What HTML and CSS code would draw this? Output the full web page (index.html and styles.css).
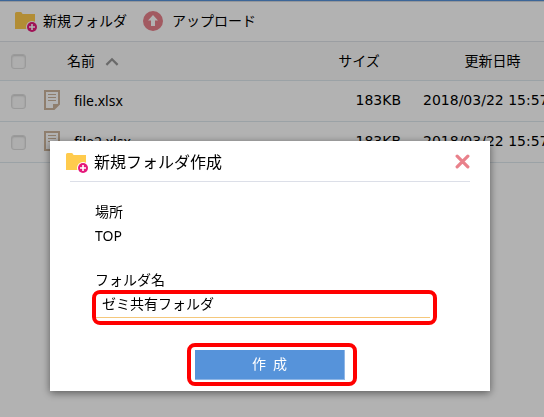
FILE: index.html
```
<!DOCTYPE html>
<html lang="ja">
<head>
  <meta charset="UTF-8" />
  <meta name="viewport" content="width=device-width, initial-scale=1.0" />
  <title>新規フォルダ作成</title>
  <link rel="stylesheet" href="styles.css">
</head>
<body>
  <!-- Shared icons -->
  <svg class="sprite" aria-hidden="true">
    <symbol id="icon-folder" viewBox="0 0 24 22">
      <path d="M1 2.5Q1 1 2.500 1H6.500Q7.500 1 8 2L8.500 3H21V18H1Z" fill="#ffcb4d" />
      <circle cx="18" cy="16" r="6" fill="#fff" />
      <circle cx="18" cy="16" r="5" fill="#e5197b" />
      <path d="M18 13V19M15 16H21" stroke="#fff" stroke-width="1.600" />
    </symbol>
    <symbol id="icon-file" viewBox="0 0 16 20">
      <path d="M1 1H15V14L10 19H1Z" fill="none" stroke="#cdb59c" stroke-width="2" />
      <path d="M9 19V14H15Z" fill="#cdb59c" />
      <path d="M4 4.500H12M4 7.500H12M4 10.500H12" stroke="#cdb59c" />
    </symbol>
  </svg>

  <main class="page">
    <div class="toolbar">
      <button class="tool" type="button">
        <svg class="folder-icon"><use href="#icon-folder" /></svg>新規フォルダ
      </button>
      <button class="tool" type="button">
        <svg class="upload-icon" viewBox="0 0 20 20">
          <circle cx="10" cy="10" r="10" fill="#e9818b" />
          <path d="M10 4L15 9.500H12V15H8V9.500H5Z" fill="#fff" />
        </svg>アップロード
      </button>
    </div>

    <table class="files">
      <colgroup>
        <col class="col-check">
        <col class="col-type">
        <col>
        <col class="col-size">
        <col class="col-date">
      </colgroup>
      <thead>
        <tr>
          <th class="check"><input type="checkbox" aria-label="すべて選択"></th>
          <th class="name" colspan="2">名前
            <svg class="sort-icon" viewBox="0 0 12 8"><path d="M1 7L6 2L11 7" fill="none" stroke="#999" stroke-width="2" /></svg>
          </th>
          <th>サイズ</th>
          <th>更新日時</th>
        </tr>
      </thead>
      <tbody>
        <tr>
          <td class="check"><input type="checkbox" aria-label="file.xlsx"></td>
          <td><svg class="file-icon"><use href="#icon-file" /></svg></td>
          <td>file.xlsx</td>
          <td class="size">183KB</td>
          <td class="date">2018/03/22 15:57</td>
        </tr>
        <tr>
          <td class="check"><input type="checkbox" aria-label="file2.xlsx"></td>
          <td><svg class="file-icon"><use href="#icon-file" /></svg></td>
          <td>file2.xlsx</td>
          <td class="size">183KB</td>
          <td class="date">2018/03/22 15:57</td>
        </tr>
      </tbody>
    </table>
  </main>

  <div class="overlay">
    <form class="dialog" role="dialog" aria-labelledby="dialog-title">
      <div class="dialog-header">
        <svg class="folder-icon"><use href="#icon-folder" /></svg>
        <h2 id="dialog-title">新規フォルダ作成</h2>
        <button class="close" type="button" aria-label="閉じる">
          <svg viewBox="0 0 14 14"><path d="M2 2L12 12M12 2L2 12" stroke="#e9818b" stroke-width="3" stroke-linecap="round" /></svg>
        </button>
      </div>
      <div class="dialog-body">
        <p>場所</p>
        <p>TOP</p>
        <label for="folder-name">フォルダ名</label>
        <div class="mark mark-input">
          <input type="text" id="folder-name" value="ゼミ共有フォルダ">
        </div>
      </div>
      <div class="mark mark-button">
        <button class="create" type="button">作&ensp;成</button>
      </div>
    </form>
  </div>
</body>
</html>
```
FILE: styles.css
```
* {
  box-sizing: border-box;
}
body {
  margin: 0;
  font-family: "Noto Sans", "Noto Sans CJK JP", sans-serif;
  font-size: 14px;
  color: #000;
  background: #fff;
}
button, input {
  font: inherit;
  color: inherit;
}
button {
  border: none;
  padding: 0;
  background: none;
  cursor: pointer;
}
.sprite {
  display: none;
}
.folder-icon {
  width: 24px;
  height: 22px;
  flex: none;
}

/* File list */
.page {
  overflow: hidden;
  border-top: 1px solid #5693da;
}
.toolbar {
  display: flex;
  gap: 16px;
  height: 41px;
  padding: 0 0 3px 14px;
  border-top: 1px solid #d5d8e0;
  border-bottom: 1px solid #dfe3e8;
}
.tool {
  display: flex;
  align-items: center;
  gap: 5px;
}
.tool .folder-icon {
  margin-top: 4px;
}
.upload-icon {
  width: 20px;
  height: 20px;
  margin: 2px 4px 0 0;
}
.files {
  width: calc(100% + 30px);
  table-layout: fixed;
  border-collapse: separate;
  border-spacing: 0;
}
.col-check {
  width: 44px;
}
.col-type {
  width: 30px;
}
.col-size {
  width: 104px;
}
.col-date {
  width: 163px;
}
.files th, .files td {
  height: 41px;
  padding: 0 0 2px;
  border-bottom: 1px solid #dfe8ee;
  white-space: nowrap;
}
.files th {
  height: 39px;
  font-weight: normal;
  background: #fafafa;
}
.files .check {
  padding: 1px 0 0 11px;
}
.files th.name {
  padding-left: 23px;
  text-align: left;
}
.files td.size {
  padding-right: 10px;
  text-align: right;
}
.files td.date {
  padding-left: 12px;
}
td.size, td.date {
  font-family: "DejaVu Sans", sans-serif;
}
.check input {
  display: block;
  appearance: none;
  width: 15px;
  height: 15px;
  margin: 0;
  border: 1px solid #ddd;
  border-radius: 3px;
  background: #fafafa;
  box-shadow: inset 0 1px 2px #ccc;
}
.sort-icon {
  width: 14px;
  height: 9px;
  margin-left: 6px;
}
.file-icon {
  display: block;
  width: 16px;
  height: 20px;
}

/* Dialog */
.overlay {
  position: fixed;
  inset: 0;
  padding: 141px 54px 26px 50px;
  background: rgba(0, 0, 0, 0.3);
}
.dialog {
  padding-bottom: 5px;
  background: #fff;
  box-shadow: 0 2px 8px rgba(0, 0, 0, 0.5);
}
.dialog-header {
  display: flex;
  align-items: center;
  height: 41px;
  margin: 0 20px;
  border-bottom: 1px solid #dcdfe8;
}
.dialog-header .folder-icon {
  margin: 4px 5px 0 -5px;
}
.dialog-header h2 {
  flex: 1;
  margin: 0;
  font-size: 16px;
  font-weight: normal;
}
.close svg {
  display: block;
  width: 15px;
  height: 15px;
}
.dialog-body {
  padding: 18px 53px 0 45px;
}
.dialog-body p {
  margin: 0;
  line-height: 24px;
}
.dialog-body label {
  display: block;
  margin-top: 20px;
  line-height: 24px;
}
.mark {
  border: 4px solid #ff0000;
  border-radius: 8px;
}
.mark-input {
  height: 35px;
  margin: -2px 0 0 -3px;
}
.mark-input input {
  display: block;
  width: calc(100% - 3px);
  height: 24px;
  padding: 0 6px 5px;
  border: none;
  border-bottom: 1px solid #f5c87c;
  outline: none;
  background: none;
}
.mark-button {
  width: 170px;
  margin: 18px auto 0 137px;
  padding: 3px 8px 2px 4px;
}
.create {
  display: block;
  width: 100%;
  height: 30px;
  padding-bottom: 3px;
  border: 1px solid #8fb6e6;
  border-width: 0 1px 1px 0;
  color: #fff;
  background: #5693da;
  word-spacing: normal;
}
```
